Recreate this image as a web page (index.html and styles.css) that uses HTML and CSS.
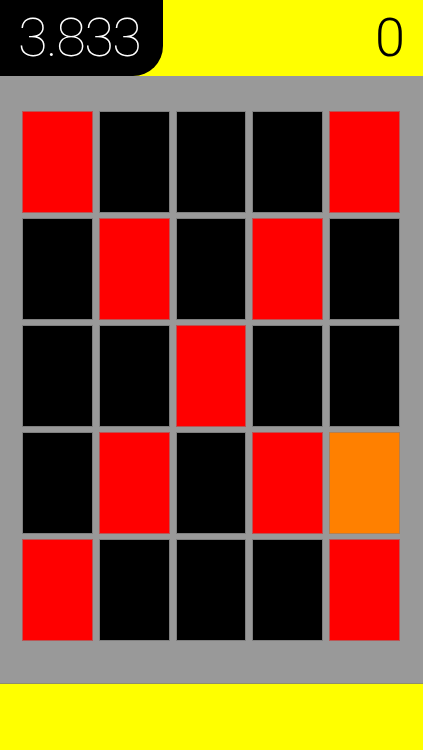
FILE: index.html
```html
<!DOCTYPE html>
<html>
<head>
<meta charset="utf-8">
<link rel="stylesheet" href="styles.css">
</head>
<body>
<div class="app">
  <header class="topbar">
    <div class="timer">3.833</div>
    <div class="score">0</div>
  </header>
  <main class="board">
    <div class="grid">
      <div class="cell red"></div><div class="cell"></div><div class="cell"></div><div class="cell"></div><div class="cell red"></div>
      <div class="cell"></div><div class="cell red"></div><div class="cell"></div><div class="cell red"></div><div class="cell"></div>
      <div class="cell"></div><div class="cell"></div><div class="cell red"></div><div class="cell"></div><div class="cell"></div>
      <div class="cell"></div><div class="cell red"></div><div class="cell"></div><div class="cell red"></div><div class="cell orange"></div>
      <div class="cell red"></div><div class="cell"></div><div class="cell"></div><div class="cell"></div><div class="cell red"></div>
    </div>
  </main>
  <footer class="bottombar"></footer>
</div>
</body>
</html>
```
FILE: styles.css
```css
html, body {
  margin: 0;
  padding: 0;
  height: 100%;
}
body {
  background: #ffff00;
  font-family: Roboto, "Liberation Sans", sans-serif;
}
.app {
  display: flex;
  flex-direction: column;
  height: 750px;
}
.topbar {
  height: 76px;
  background: #ffff00;
  display: flex;
  justify-content: space-between;
  align-items: stretch;
}
.timer {
  width: 163px;
  background: #000;
  color: #fff;
  border-bottom-right-radius: 30px;
  box-sizing: border-box;
  padding-left: 18px;
  font-size: 54px;
  font-weight: 100;
  line-height: 76px;
  letter-spacing: -1.5px;
}
.score {
  color: #000;
  font-size: 54px;
  font-weight: 300;
  line-height: 76px;
  padding-right: 18px;
}
.board {
  background: #999999;
  padding: 36px 24px 43px 23px;
  border-bottom: 1px solid #8f8f6a;
}
.grid {
  display: grid;
  grid-template-columns: repeat(5, 1fr);
  grid-template-rows: repeat(5, 100px);
  column-gap: 8px;
  row-gap: 7px;
}
.cell {
  background: #000;
  box-shadow: 0 0 0 1px rgba(80, 80, 80, 0.35);
}
.cell.red {
  background: #ff0000;
  box-shadow: 0 0 0 1px rgba(210, 40, 40, 0.6);
}
.cell.orange {
  background: #ff8000;
  box-shadow: 0 0 0 1px rgba(200, 110, 30, 0.6);
}
.bottombar {
  flex: 1;
  background: #ffff00;
}
```
